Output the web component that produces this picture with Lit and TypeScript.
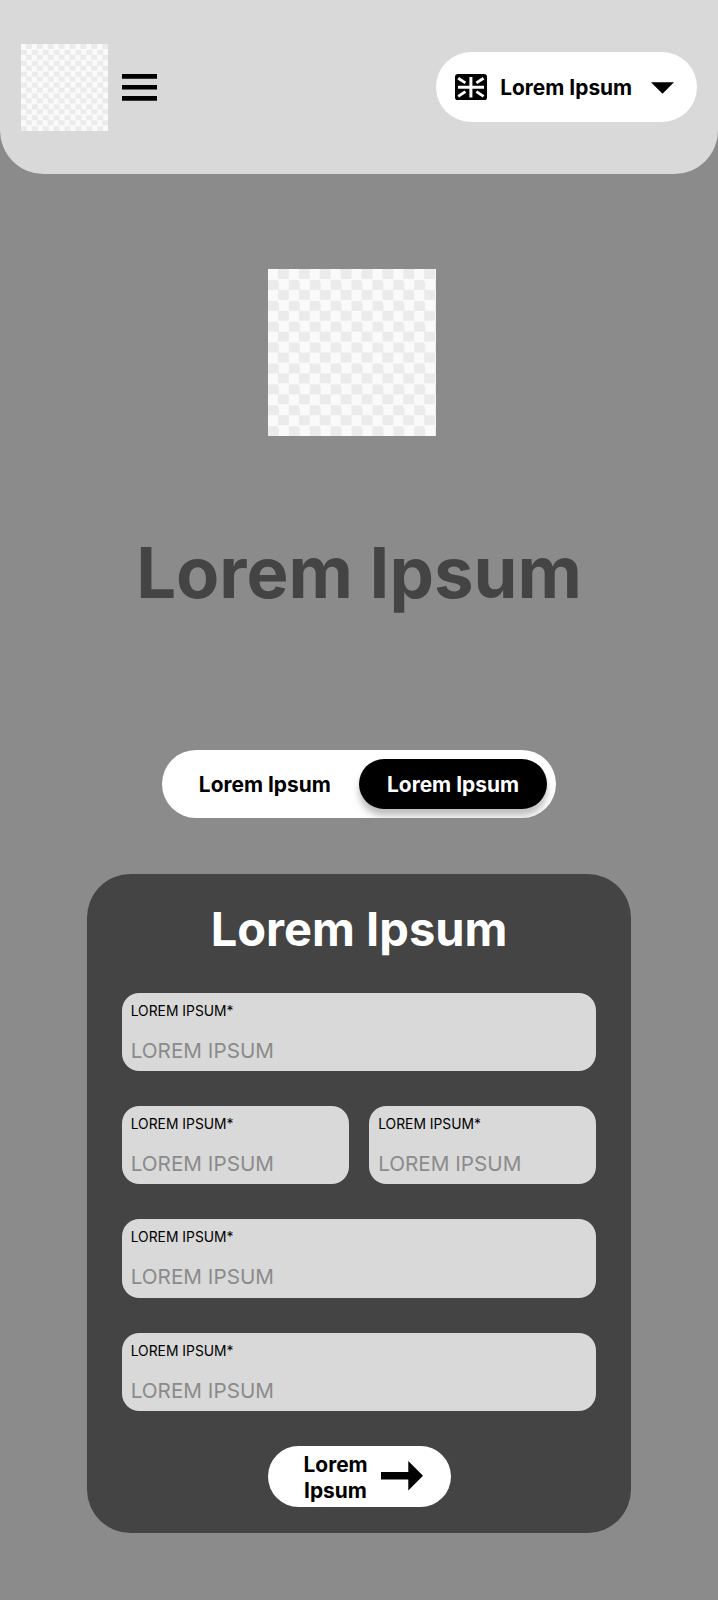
import { LitElement, html, css, svg } from "lit";
import { customElement, property } from "lit/decorators.js";

@customElement("form-field")
class FormField extends LitElement {
  @property() label = "";
  @property() placeholder = "";

  static styles = css`
    :host {
      display: block;
      box-sizing: border-box;
      height: 78.4px;
      padding: 9.9px 8.7px 0;
      border-radius: 17.4px;
      background: #d9d9d9;
    }
    .label {
      font-size: 13.85px;
      line-height: 17px;
      color: #000;
    }
    .placeholder {
      margin-top: 18px;
      font-size: 20.7px;
      line-height: 25px;
      font-weight: 380;
      color: #8b8b8b;
    }
  `;

  render() {
    return html`
      <div class="label">${this.label}</div>
      <div class="placeholder">${this.placeholder}</div>
    `;
  }
}

const flag = svg`
  <rect x="0" y="0" width="32" height="26.4" rx="3" fill="#000" />
  <g stroke="#fff" fill="none">
    <path d="M15.9 3V23.4M3 13.2H29" stroke-width="3" />
    <path d="M3.2 4.2L10.4 8.9M28.6 4.2L21.4 8.9M3.2 22.4L10.4 17.6M28.6 22.4L21.4 17.6" stroke-width="2.9" />
  </g>
`;

@customElement("app-root")
class AppRoot extends LitElement {
  static styles = css`
    :host {
      display: block;
      box-sizing: border-box;
      height: 1600px;
      overflow: hidden;
      background: #8b8b8b;
      font-family: Inter, "Liberation Sans", sans-serif;
    }
    svg {
      display: block;
      flex: none;
    }
    .header {
      box-sizing: border-box;
      height: 174.3px;
      display: flex;
      align-items: center;
      padding: 0 20.9px;
      border-radius: 0 0 43.6px 43.6px;
      background: #d9d9d9;
    }
    .checker {
      background: repeating-conic-gradient(#ebebeb 0 25%, #fafafa 0 50%);
    }
    .brand {
      width: 87.1px;
      height: 87.1px;
      background-size: 10.9px 10.9px;
    }
    .menu {
      margin-left: 14px;
    }
    .language {
      box-sizing: border-box;
      width: 261.4px;
      height: 69.7px;
      margin-left: auto;
      padding-left: 18.8px;
      display: flex;
      align-items: center;
      border-radius: 35px;
      background: #fff;
    }
    .language span {
      margin: 0 18.7px 0 13.7px;
      padding-top: 1.4px;
    }
    .strong {
      font-size: 20.91px;
      line-height: 26px;
      font-weight: 700;
      white-space: nowrap;
    }
    .hero {
      width: 167.3px;
      height: 167.3px;
      margin: 94.5px 0 0 268.4px;
      background-size: 20.9px 20.9px;
    }
    h1 {
      margin: 95px 0 0;
      text-align: center;
      font-size: 70.6px;
      line-height: 84px;
      font-weight: 700;
      color: #444;
    }
    .toggle {
      box-sizing: border-box;
      width: 393.9px;
      height: 68px;
      margin: 134.7px auto 0;
      padding: 9px 8.7px 8.4px;
      display: flex;
      overflow: hidden;
      border-radius: 34px;
      background: #fff;
    }
    .option {
      box-sizing: border-box;
      width: 188.2px;
      height: 50.6px;
      padding-top: 1px;
      display: flex;
      align-items: center;
      justify-content: center;
      border-radius: 25.3px;
    }
    .selected {
      background: #000;
      color: #fff;
      box-shadow: 0 7px 7px rgba(0, 0, 0, 0.25);
    }
    .card {
      box-sizing: border-box;
      width: 543.7px;
      height: 659.3px;
      margin: 56px auto 0;
      padding: 26px 34.85px 0;
      border-radius: 43.6px;
      background: #444;
    }
    h2 {
      margin: 0 0 35px;
      text-align: center;
      font-size: 47px;
      line-height: 58px;
      font-weight: 700;
      color: #fff;
    }
    .fields {
      display: grid;
      grid-template-columns: 1fr 1fr;
      gap: 34.9px 20.9px;
    }
    .wide {
      grid-column: span 2;
    }
    .submit {
      width: 183px;
      height: 61px;
      margin: 34.9px auto 0;
      display: flex;
      align-items: center;
      border-radius: 31px;
      background: #fff;
    }
    .submit span {
      width: 64px;
      margin: 0 13px 0 36px;
      padding-top: 3px;
      white-space: normal;
      text-align: center;
    }
  `;

  render() {
    const field = (wide: boolean) => html`
      <form-field class=${wide ? "wide" : ""} label="LOREM IPSUM*" placeholder="LOREM IPSUM"></form-field>
    `;
    return html`
      <div class="header">
        <div class="brand checker"></div>
        <svg class="menu" width="35" height="27" viewBox="0 0 35 27">
          <path d="M0 2.4H35M0 13.3H35M0 24.4H35" stroke="#000" stroke-width="4.6" />
        </svg>
        <div class="language">
          <svg width="32" height="26.4" viewBox="0 0 32 26.4">${flag}</svg>
          <span class="strong">Lorem Ipsum</span>
          <svg width="23" height="14" viewBox="0 0 23 14"><path d="M0 2.3H23L11.5 13.8Z" /></svg>
        </div>
      </div>
      <div class="hero checker"></div>
      <h1>Lorem Ipsum</h1>
      <div class="toggle strong">
        <div class="option">Lorem Ipsum</div>
        <div class="option selected">Lorem Ipsum</div>
      </div>
      <div class="card">
        <h2>Lorem Ipsum</h2>
        <div class="fields">${[true, false, false, true, true].map(field)}</div>
        <div class="submit strong">
          <span>Lorem Ipsum</span>
          <svg width="42" height="30" viewBox="0 0 42 30">
            <path d="M0 11H27.3V0L42 14.8L27.3 29.5V18.6H0Z" />
          </svg>
        </div>
      </div>
    `;
  }
}
